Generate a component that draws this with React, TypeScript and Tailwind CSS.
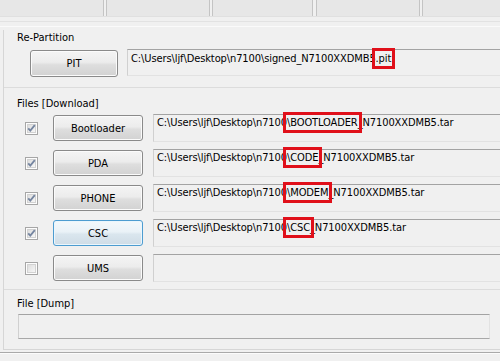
import React from "react";

const font = { fontFamily: '"DejaVu Sans Condensed", "Liberation Sans", sans-serif' };

function Btn({ label, w, focused = false }: { label: string; w: string; focused?: boolean }) {
  return (
    <div
      className={
        "mt-[1px] h-[26px] shrink-0 rounded-[3px] border flex items-center justify-center text-black " +
        w +
        (focused
          ? " border-[#4d9cd0] bg-[linear-gradient(#f3f8fb,#eaf2f7_45%,#dae6ee_55%,#cfdce6)] shadow-[inset_0_0_0_1px_#eaf6fd]"
          : " border-[#8a8a8a] bg-[linear-gradient(#f4f4f4,#ececec_45%,#dedede_55%,#d2d2d2)] shadow-[inset_0_0_0_1px_#fbfbfb]")
      }
    >
      {label}
    </div>
  );
}

function Check({ checked }: { checked: boolean }) {
  return (
    <svg width="13" height="13" viewBox="0 0 13 13" className="shrink-0 self-center">
      <defs>
        <linearGradient id="cb" x1="0" y1="0" x2="1" y2="1">
          <stop offset="0" stopColor="#dcdcdc" />
          <stop offset="1" stopColor="#f8f8f8" />
        </linearGradient>
      </defs>
      <rect x="0.5" y="0.5" width="12" height="12" fill="#fdfdfd" stroke="#a6a6a6" />
      <rect x="2.5" y="2.5" width="8" height="8" fill="url(#cb)" stroke="#d2d2d2" />
      {checked && (
        <path d="M3.2 6.3 L5.3 8.6 L9.8 3.2" fill="none" stroke="#7585a0" strokeWidth="1.8" />
      )}
    </svg>
  );
}

function Field({ children, cls = "" }: { children?: React.ReactNode; cls?: string }) {
  return (
    <div
      className={
        "flex-1 min-w-0 whitespace-nowrap overflow-visible border-t border-l border-b border-t-[#a3a3a3] border-l-[#d0d0d0] border-b-[#e2e2e2] bg-[#f0f0f0] pl-[3px] tracking-[-0.1px] " +
        cls
      }
    >
      {children}
    </div>
  );
}

function Mark({ children }: { children: React.ReactNode }) {
  return <span className="outline-[3px] outline-solid outline-[#e0101a] outline-offset-[1px]">{children}</span>;
}

function Row({ label, checked, focused, children }: { label: string; checked: boolean; focused?: boolean; children?: React.ReactNode }) {
  return (
    <div className="flex items-start pl-[21px]">
      <Check checked={checked} />
      <div className="ml-[15px] flex">
        <Btn label={label} w="w-[90px]" focused={focused} />
      </div>
      <div className="ml-[10px] flex flex-1 min-w-0">
        <Field cls="h-[28px] pt-[1px]">{children}</Field>
      </div>
    </div>
  );
}

export default function App() {
  const base = "C:\\Users\\ljf\\Desktop\\n7100";
  return (
    <div className="relative w-[500px] h-[361px] overflow-hidden bg-[#f0f0f0] text-[11px] leading-[13px] text-black" style={font}>
      {/* top strip */}
      <div className="flex h-[17px] border-b border-[#e0e0e0]">
        <div className="w-[104px] shrink-0 bg-[#e7e7e7] border-r border-[#c4c4c4]" />
        <div className="ml-[2px] w-[104px] shrink-0 bg-[#e7e7e7] border-x border-[#c4c4c4]" />
        <div className="ml-[2px] w-[101px] shrink-0 bg-[#e7e7e7] border-x border-[#c4c4c4]" />
        <div className="ml-[3px] w-[104px] shrink-0 bg-[#e7e7e7] border-x border-[#c4c4c4]" />
        <div className="ml-[2px] flex-1 bg-[#e7e7e7] border-l border-[#c4c4c4]" />
      </div>
      <div className="h-[13px] pt-[4px]">
        <div className="h-[1px] bg-[#e2e2e2]" />
        <div className="mt-[4px] h-[1px] bg-[#fafafa]" />
      </div>

      {/* main container */}
      <div className="ml-[3px] border-l border-b border-[#d6d6d6] h-[320px]">
        {/* Re-Partition */}
        <div className="pt-[1px] pb-[10px] border-b border-[#dcdcdc]">
          <div className="pl-[13px] h-[13px]">Re-Partition</div>
          <div className="mt-[5px] flex items-start pl-[26px]">
            <Btn label="PIT" w="w-[88px] h-[27px]" />
            <div className="ml-[9px] flex flex-1 min-w-0">
              <Field cls="h-[27px] pt-[2px]">
                {base}\signed_N7100XXDMB5<Mark>.pit</Mark>
              </Field>
            </div>
          </div>
        </div>

        {/* Files [Download] */}
        <div className="pt-[9px] pb-[7px] border-b border-[#dcdcdc]">
          <div className="pl-[13px] h-[13px]">Files [Download]</div>
          <div className="mt-[4px] flex flex-col gap-[7px]">
            <Row label="Bootloader" checked>
              {base}<Mark>\BOOTLOADER</Mark>_N7100XXDMB5.tar
            </Row>
            <Row label="PDA" checked>
              {base}<Mark>\CODE</Mark>_N7100XXDMB5.tar
            </Row>
            <Row label="PHONE" checked>
              {base}<Mark>\MODEM</Mark>_N7100XXDMB5.tar
            </Row>
            <Row label="CSC" checked focused>
              {base}<Mark>\CSC</Mark>_N7100XXDMB5.tar
            </Row>
            <Row label="UMS" checked={false} />
          </div>
        </div>

        {/* File [Dump] */}
        <div className="pt-[7px]">
          <div className="pl-[13px] h-[13px]">File [Dump]</div>
          <div className="mt-[4px] ml-[14px] w-[472px] h-[25px] border-t border-l border-b border-r border-t-[#a3a3a3] border-l-[#d0d0d0] border-b-[#a8a8a8] border-r-[#e2e2e2] bg-[#f0f0f0]" />
        </div>
      </div>
      <div className="mt-[2px] h-[1px] bg-[#a9a9a9]" />
      <div className="h-[1px] bg-[#fbfbfb]" />
    </div>
  );
}
